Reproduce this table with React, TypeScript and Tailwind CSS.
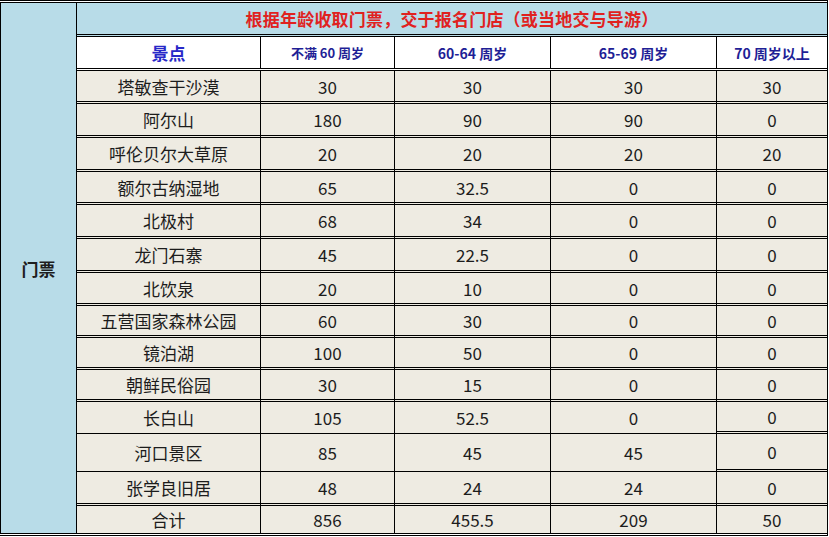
import React from "react";

type Row = { name: string; v: string[]; h: string; single?: boolean };

const rows: Row[] = [
  { name: "塔敏查干沙漠", v: ["30", "30", "30", "30"], h: "h-[33px]" },
  { name: "阿尔山", v: ["180", "90", "90", "0"], h: "h-[34px]" },
  { name: "呼伦贝尔大草原", v: ["20", "20", "20", "20"], h: "h-[34px]" },
  { name: "额尔古纳湿地", v: ["65", "32.5", "0", "0"], h: "h-[33px]" },
  { name: "北极村", v: ["68", "34", "0", "0"], h: "h-[34px]" },
  { name: "龙门石寨", v: ["45", "22.5", "0", "0"], h: "h-[34px]" },
  { name: "北饮泉", v: ["20", "10", "0", "0"], h: "h-[33px]" },
  { name: "五营国家森林公园", v: ["60", "30", "0", "0"], h: "h-[32px]" },
  { name: "镜泊湖", v: ["100", "50", "0", "0"], h: "h-[32px]" },
  { name: "朝鲜民俗园", v: ["30", "15", "0", "0"], h: "h-[32px]" },
  { name: "长白山", v: ["105", "52.5", "0", "0"], h: "h-[32px]", single: true },
  { name: "河口景区", v: ["85", "45", "45", "0"], h: "h-[38px]", single: true },
  { name: "张学良旧居", v: ["48", "24", "24", "0"], h: "h-[34px]" },
];

const cols = "grid grid-cols-[184px_134px_156px_166px_110px]";

export default function App() {
  return (
    <div
      className="w-[828px] h-[536px] bg-white border-t-[3px] border-b-[3px] border-double border-x border-x-black border-y-black box-border flex text-[#1c1c1c]"
      style={{ fontFamily: '"Noto Sans CJK SC", "Noto Sans", sans-serif' }}
    >
      <div className="w-[76px] shrink-0 bg-[#b8dce8] border-r border-black flex items-center justify-center">
        <span className="text-[17px] font-bold leading-none text-[#1e1e1e]">门票</span>
      </div>
      <div className="flex-1 flex flex-col">
        <div className="h-[34px] bg-[#b8dce8] border-b-[3px] border-double border-black flex items-center justify-center">
          <span className="text-[17px] font-bold leading-none text-[#e0221f] tracking-[0.2px]">
            根据年龄收取门票，交于报名门店（或当地交与导游）
          </span>
        </div>
        <div className={`${cols} h-[34px] bg-white border-b-[3px] border-double border-black`}>
          <div className="border-r border-black flex items-center justify-center text-[17px] font-bold leading-none text-[#2828c8]">
            景点
          </div>
          <div className="border-r border-black flex items-center justify-center text-[13px] font-bold leading-none text-[#1f1f96]">
            不满 60 周岁
          </div>
          <div className="border-r border-black flex items-center justify-center text-[14px] font-bold leading-none text-[#1f1f96]">
            60-64 周岁
          </div>
          <div className="border-r border-black flex items-center justify-center text-[14px] font-bold leading-none text-[#1f1f96]">
            65-69 周岁
          </div>
          <div className="flex items-center justify-center text-[14px] font-bold leading-none text-[#1f1f96]">
            70 周岁以上
          </div>
        </div>
        {rows.map((r) => (
          <div key={r.name} className={`${cols} ${r.h} bg-[#eeebe2] text-[17px] leading-none`}>
            <div
              className={`border-r border-black flex items-center justify-center ${
                r.single ? "border-b" : "border-b-[3px] border-double"
              } border-b-black`}
            >
              {r.name}
            </div>
            {r.v.map((x, i) => (
              <div
                key={i}
                className={`flex items-center justify-center ${i < 3 ? "border-r border-black" : ""} ${
                  r.single && i < 3 ? "border-b" : "border-b-[3px] border-double"
                } border-b-black`}
              >
                {x}
              </div>
            ))}
          </div>
        ))}
        <div className={`${cols} h-[27px] bg-[#eeebe2] text-[17px] leading-none`}>
          <div className="border-r border-black flex items-center justify-center">合计</div>
          <div className="border-r border-black flex items-center justify-center">856</div>
          <div className="border-r border-black flex items-center justify-center">455.5</div>
          <div className="border-r border-black flex items-center justify-center">209</div>
          <div className="flex items-center justify-center">50</div>
        </div>
      </div>
    </div>
  );
}
